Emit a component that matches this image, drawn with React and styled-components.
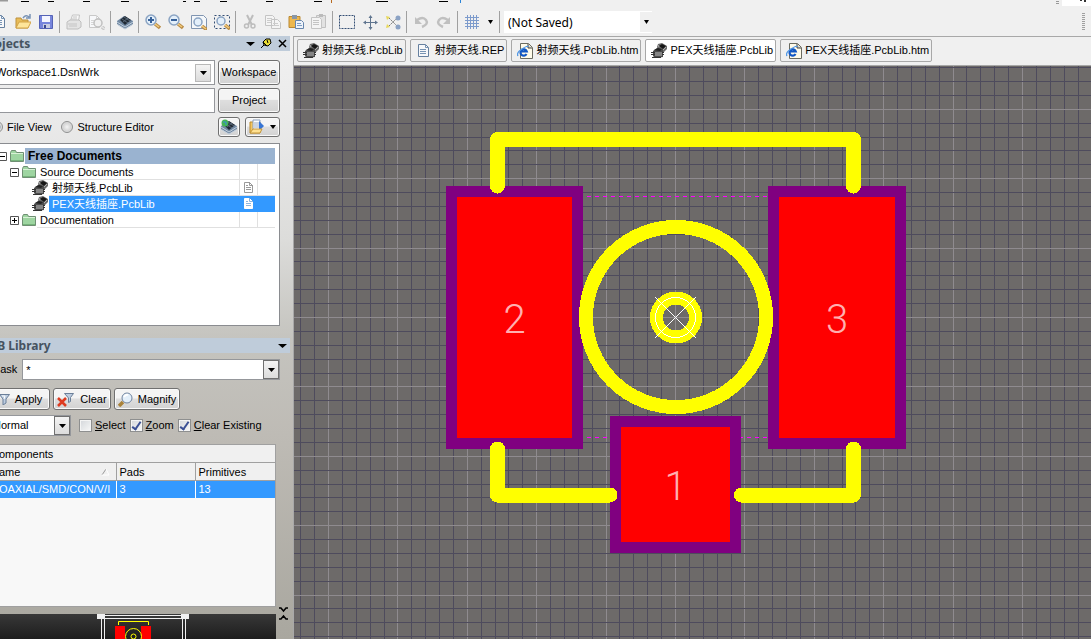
import React, { useState } from "react";
import styled, { createGlobalStyle } from "styled-components";

const uiFont = `"Liberation Sans", "Noto Sans CJK SC", sans-serif`;

const GlobalStyle = createGlobalStyle`
    * {
        box-sizing: border-box;
    }
    body {
        margin: 0;
        overflow: hidden;
        background: #f0f0f0;
        font-family: ${uiFont};
        font-size: 11px;
        line-height: 17px;
        color: #000;
    }
    button, input, select {
        font: inherit;
        color: inherit;
        margin: 0;
        padding: 0;
    }
    svg {
        display: block;
        flex-shrink: 0;
    }
`;

const Page = styled.div`
    height: 100vh;
    display: flex;
    flex-direction: column;
`;

const MenuEdge = styled.header`
    height: 8px;
    display: flex;
    justify-content: space-between;
`;

const Toolbar = styled.div`
    height: 28px;
    margin-left: -12px;
    padding-right: 6px;
    display: flex;
    align-items: center;
`;

const ToolButton = styled.button`
    width: ${(props) => (props.$narrow ? "14px" : "23px")};
    height: 22px;
    display: flex;
    align-items: center;
    justify-content: center;
    flex-shrink: 0;
    border: none;
    background: none;
`;

const Separator = styled.div`
    width: 5px;
    height: 22px;
    flex-shrink: 0;
    background: linear-gradient(#a0a0a0, #a0a0a0) center / 1px 100% no-repeat;
`;

const SavedCombo = styled.div`
    width: 148px;
    height: 22px;
    margin-left: 2px;
    display: flex;
    align-items: center;
    background: #fff;
`;

const Select = styled.select`
    flex: 1;
    min-width: 0;
    height: 100%;
    padding-left: ${(props) => props.$pad}px;
    appearance: none;
    border: none;
    outline: none;
    background: #fff;
    font-family: ${(props) => (props.$large ? `"Noto Sans", sans-serif` : "inherit")};
    font-size: ${(props) => (props.$large ? "12px" : "11px")};
`;

const SavedArrow = styled.span`
    width: 12px;
    height: 20px;
    display: flex;
    align-items: center;
    justify-content: center;
    background: #f0f0f0;
`;

const Gripper = styled.div`
    width: 3px;
    height: 18px;
    margin-left: auto;
    background: repeating-linear-gradient(#a0a0a0 0 1px, #f0f0f0 1px 2px);
`;

const Workbench = styled.div`
    flex: 1;
    min-height: 0;
    display: flex;
`;

const SidePanel = styled.aside`
    width: 294px;
    flex-shrink: 0;
    overflow: hidden;
    display: flex;
    border-right: 1px solid #a8a8a8;
    background: linear-gradient(#f1f1f1 0%, #ebebeb 12%, #dcdcda 34%, #c5c4bf 50%, #bebbb5 66%, #a9a79f 100%);
`;

/* the dock hangs a little past the left edge of the window */
const Dock = styled.div`
    flex: 1;
    min-width: 0;
    margin-left: -24px;
    display: flex;
    flex-direction: column;
`;

const PanelTitle = styled.h2`
    height: 15px;
    margin: 0 3px 0 0;
    padding: 0 1px 0 6px;
    display: flex;
    align-items: center;
    gap: 2px;
    background: #bfccda;
    color: #465360;
    font-family: "Noto Sans", sans-serif;
    font-size: 12px;
    line-height: 16px;
    font-weight: bold;
`;

const TitleText = styled.span`
    flex: 1;
`;

const TitleButton = styled.button`
    width: 14px;
    height: 14px;
    display: flex;
    align-items: center;
    justify-content: center;
    border: none;
    background: none;
`;

const PanelBody = styled.div`
    padding: ${(props) => props.$top}px 13px 0 15px;
    display: flex;
    flex-direction: column;
`;

const Row = styled.div`
    height: ${(props) => props.$h}px;
    margin-bottom: ${(props) => props.$after || 0}px;
    display: flex;
    align-items: center;
    gap: ${(props) => props.$gap || 3}px;
`;

const Field = styled.div`
    flex: ${(props) => (props.$w ? "none" : 1)};
    width: ${(props) => (props.$w ? props.$w + "px" : "auto")};
    min-width: 0;
    height: 100%;
    display: flex;
    align-items: center;
    border: 1px solid #95979b;
    background: #fff;
`;

const FieldArrow = styled.span`
    width: 16px;
    height: ${(props) => (props.$inset ? "18px" : "100%")};
    margin-right: ${(props) => (props.$inset ? "3px" : 0)};
    display: flex;
    align-items: center;
    justify-content: center;
    border: 1px solid ${(props) => (props.$inset ? "#b8b8b8" : "#707070")};
    background: linear-gradient(#f4f4f4, #dcdcdc);
`;

const TextBox = styled.input`
    flex: 1;
    min-width: 0;
    height: 100%;
    padding-left: 3px;
    border: none;
    outline: none;
    background: #fff;
`;

const PushButton = styled.button`
    width: ${(props) => props.$w}px;
    height: ${(props) => props.$h || 22}px;
    display: flex;
    align-items: center;
    justify-content: center;
    flex-shrink: 0;
    gap: 5px;
    border: 1px solid #707070;
    border-radius: 3px;
    background: linear-gradient(#f4f4f4 45%, #dedede 50%, #d2d2d2);
    box-shadow: inset 0 0 0 1px #fafafa;
`;

const ViewChoice = styled.div`
    flex: 1;
    display: flex;
    gap: 10px;
`;

const CheckLabel = styled.label`
    display: flex;
    align-items: center;
    gap: ${(props) => props.$gap || 3}px;
    white-space: nowrap;
`;

const Radio = styled.input`
    appearance: none;
    width: 12px;
    height: 12px;
    border: 1px solid #8e8f8f;
    border-radius: 50%;
    background: ${(props) =>
        props.checked
            ? "radial-gradient(#2f5f90 0 2px, #d8d8d8 4px, #f4f4f4)"
            : "radial-gradient(#f4f4f4, #d4d4d4 4px, #f4f4f4)"};
`;

const CheckBox = styled.input`
    appearance: none;
    width: 13px;
    height: 13px;
    display: grid;
    place-content: center;
    border: 1px solid #8e8f8f;
    background: linear-gradient(135deg, #d3d6da, #f8f8f8);
    box-shadow: inset 0 0 0 1px #f4f4f4;
    &:checked::before {
        content: "";
        width: 3px;
        height: 8px;
        margin-bottom: 2px;
        border: solid #3a4f94;
        border-width: 0 2px 2px 0;
        box-sizing: content-box;
        transform: rotate(35deg);
    }
`;

const Tree = styled.ul`
    height: 183px;
    margin: 0;
    padding: 4px 4px 0 0;
    list-style: none;
    border: 1px solid #8a8c90;
    background: #fff;
`;

const TreeRow = styled.li`
    height: 16px;
    padding-left: ${(props) => props.$indent}px;
    display: flex;
    align-items: center;
`;

const Expander = styled.button`
    width: 9px;
    height: 9px;
    margin-right: 3px;
    display: flex;
    flex-shrink: 0;
    border: none;
    background: none;
`;

const TreeLabel = styled.span`
    flex: 1;
    height: 16px;
    margin-left: 1px;
    padding-left: 3px;
    font-size: ${(props) => (props.$root ? "12px" : "11px")};
    font-weight: ${(props) => (props.$root ? "bold" : "normal")};
    color: ${(props) => (props.$selected ? "#fff" : "#000")};
    background: ${(props) => (props.$root ? "#9ab3d0" : props.$selected ? "#3399ff" : "none")};
    border-bottom: 1px solid
        ${(props) => (props.$root ? "#9ab3d0" : props.$selected ? "#3399ff" : "#e0e0e0")};
    white-space: nowrap;
`;

const TreeCell = styled.span`
    width: 18px;
    height: 16px;
    display: flex;
    align-items: center;
    justify-content: center;
    border: solid #e0e0e0;
    border-width: 0 0 1px 1px;
    background: ${(props) => (props.$selected ? "#3399ff" : "none")};
    border-color: ${(props) => (props.$selected ? "#3399ff" : "#e0e0e0")};
`;

const ListFrame = styled.div`
    height: 163px;
    margin: 8px 17px 0 12px;
    border: solid #a0a0a0;
    border-width: 1px 1px 1px 0;
    background: #f8f8f8;
`;

const List = styled.table`
    width: 100%;
    table-layout: fixed;
    border-collapse: collapse;
    caption {
        height: 18px;
        padding: 1px 0 0 3px;
        text-align: left;
        line-height: 16px;
        border-bottom: 1px solid #a0a0a0;
        background: #f0f0f0;
    }
    th, td {
        height: 17px;
        padding: 0 3px;
        line-height: 16px;
        text-align: left;
        font-weight: normal;
        white-space: nowrap;
        overflow: hidden;
    }
    th {
        padding-top: 1px;
        background: #f0f0f0;
        border-bottom: 1px solid #a0a0a0;
    }
    th + th {
        border-left: 1px solid #a0a0a0;
    }
    td {
        color: #fff;
        background: #3399ff;
    }
    td + td {
        border-left: 1px solid #fff;
    }
`;

const HeadCell = styled.span`
    display: flex;
    align-items: center;
    justify-content: space-between;
    padding-right: 3px;
`;

const PreviewRow = styled.div`
    flex: 1;
    min-height: 0;
    display: flex;
    gap: 3px;
`;

const Preview = styled.div`
    width: 300px;
    margin-top: 7px;
    padding-left: 24px;
    overflow: hidden;
    background: linear-gradient(#383838, #1c1c1c 26px);
`;

const Editor = styled.main`
    flex: 1;
    min-width: 0;
    display: flex;
    flex-direction: column;
    border-top: 1px solid #a8a8a8;
`;

const Tabs = styled.nav`
    height: 29px;
    padding: 2px 3px 0;
    display: flex;
    align-items: flex-start;
    gap: 4px;
    border-bottom: 1px solid #a8a8a8;
`;

const Tab = styled.button`
    height: 23px;
    padding: 0 2px 0 5px;
    display: flex;
    align-items: center;
    gap: 3px;
    flex-shrink: 0;
    border: 1px solid #a8a8a8;
    border-radius: 2px;
    background: ${(props) => (props.$active ? "#fff" : "#f0f0f0")};
    white-space: nowrap;
`;

const Board = styled.div`
    flex: 1;
    min-height: 0;
    overflow: hidden;
    background: #6d6a69;
`;

const Icon = ({ children, w = 16, h = 16 }) => (
    <svg width={w} height={h} viewBox={`0 0 ${w} ${h}`} fill="none">
        {children}
    </svg>
);

const Down = ({ w = 7 }) => (
    <svg width={w} height={4} viewBox="0 0 7 4" preserveAspectRatio="none">
        <path d="M0 0h7L3.5 4z" fill="#000" />
    </svg>
);

const Sheet = ({ x = 2, y = 1, gray }) => (
    <g transform={`translate(${x} ${y})`}>
        <path d="M.5 .5h7l3 3v9H.5z" fill="#f7f8fa" stroke={gray ? "#c8c8c8" : "#66809f"} />
        <path d="M7.5 .5v3h3M2 5.5h6M2 7.5h6M2 9.5h6" stroke={gray ? "#d6d6d6" : "#7894b4"} />
    </g>
);

const Lens = ({ sign, gray, x = 0, y = 0, r = 5 }) => (
    <g transform={`translate(${x} ${y})`}>
        <path d="M10 10l5 4" stroke={gray ? "#c4c4c4" : "#b98b45"} strokeWidth="3.5" />
        <path d="M10 10l4 3" stroke={gray ? "#e4e4e4" : "#f2cc7c"} strokeWidth="1.5" />
        <circle cx="6" cy="6" r={r} fill={gray ? "#f0f0f0" : "#e3effa"} stroke={gray ? "#c0c0c0" : "#8ba4c3"} strokeWidth="1.5" />
        {sign && <path d={sign === "+" ? "M3 6h6M6 3v6" : "M3 6h6"} stroke="#37629b" strokeWidth="2" />}
    </g>
);

const PartIcon = () => (
    <Icon>
        <path d="M6 4l1-3 4-1 5 3v3l-4 4-5-2z" fill="#6a6a6a" />
        <path d="M8 3l3-2 4 2-3 3z" fill="#161616" />
        <path d="M2 8l4-3 6 1v8l-8 1-2-2z" fill="#4c4c4c" />
        <path d="M3 7l4-2 4 1-2 2z" fill="#222" />
        <path d="M4 9h7v4H4z" fill="#858585" />
        <path d="M0 9.500h4M0 11.500h4M1 14.500h9M11 9.500h2M11 11.500h2" stroke="#333" />
        <path d="M7 2l1 2M15 4l-3 3" stroke="#b0b0b0" />
    </Icon>
);

const ChipIcon = ({ globe }) => (
    <Icon>
        <path d="M0 7l7-5 9 5v3l-8 5-8-5z" fill="#7188a2" />
        <path d="M0 8l8 5 8-5M1 11l7 4 7-4" stroke="#c3d0dd" />
        <path d="M3 6l5-4 6 4-6 5z" fill="#202a35" />
        <path d="M5 5l6 4M7 3l6 4M6 8l5-4" stroke="#566575" />
        {globe && <circle cx="4" cy="4" r="3.500" fill="#44b554" />}
        {globe && <path d="M2 3h3v3" stroke="#3a88dd" />}
    </Icon>
);

const BrowserIcon = () => (
    <Icon>
        <path d="M3.500 .5h8l4 4v11h-12z" fill="#fffbea" stroke="#6b6b60" />
        <path d="M11 1v4h4" fill="#d9d8ca" stroke="#444" />
        <path d="M9.500 11A3.200 3.200 0 1 1 9.800 8.500H4" stroke="#1257c4" strokeWidth="2.200" />
        <path d="M1 13Q-1 10 5 6T11 4" stroke="#5399e5" strokeWidth="1.300" />
    </Icon>
);

const ReportIcon = () => (
    <Icon>
        <Sheet x={2} y={1} />
    </Icon>
);

const FolderIcon = () => (
    <Icon w={14} h={12}>
        <path d="M.5 2.500l1-2h4l1 2h7v9H.5z" fill="#9ed5a1" stroke="#6f8f73" />
        <path d="M1 3.500h12" stroke="#d8f1d6" />
        <path d="M1 10.500h12" stroke="#76b47b" />
    </Icon>
);

const OpenIcon = () => (
    <Icon>
        <path d="M1 14V4h5l1 2h6v8z" fill="#e8bc58" stroke="#bd913d" />
        <path d="M1 14l3-6h12l-3 6z" fill="#fee59a" stroke="#d2a346" />
        <path d="M8 4q3-4 6-1M11 4h4V0" stroke="#7892b5" strokeWidth="1.500" />
    </Icon>
);

const FunnelIcon = () => (
    <Icon w={11} h={11}>
        <path d="M.5 .5h10L7 5v4l-3 2V5z" fill="#bdcde0" stroke="#6b7f99" />
        <path d="M3 2h3l-1 3" stroke="#fff" />
    </Icon>
);

const DocMark = ({ light }) => (
    <Icon w={9} h={11}>
        <path d="M.5 .5h5l3 3v7h-8z" fill={light ? "#fff" : "#fff"} stroke={light ? "#fff" : "#999"} />
        <path d="M5.500 0v3.500H9M2 5.500h5M2 7.500h5M2 3.500h2" stroke={light ? "#8fb4dc" : "#999"} />
    </Icon>
);

const toolGroups = [
    [
        ["New", <Icon><Sheet x={2} y={1} /></Icon>],
        ["Open", <OpenIcon />],
        [
            "Save",
            <Icon>
                <path d="M1.500 1.500h13v13h-13z" fill="#7785dc" stroke="#5563b6" />
                <path d="M4 2h8v6H4z" fill="#f4f5ff" />
                <path d="M5 10h7v4H5z" fill="#c8cce2" />
                <path d="M6 11h2v3H6z" fill="#39468f" />
            </Icon>,
        ],
    ],
    [
        [
            "Print",
            <Icon>
                <path d="M4.500 7l2-6h7l-1 6" fill="#f9f9f9" stroke="#c4c4c4" />
                <path d="M1 8l3-2h9l2 2v5l-3 2H1z" fill="#e4e4e4" stroke="#bebebe" />
                <path d="M2 10h9M3 12h8M7 3h4M6 5h5" stroke="#c4c4c4" />
            </Icon>,
        ],
        ["Print Preview", <Icon><Sheet x={0} y={1} gray /><Lens x={3} y={3} r={4} gray /></Icon>],
    ],
    [["Devices", <ChipIcon />]],
    [
        ["Zoom In", <Icon><Lens sign="+" /></Icon>],
        ["Zoom Out", <Icon><Lens sign="-" /></Icon>],
        [
            "Fit Document",
            <Icon>
                <path d="M.5 1.500h12l3 3v10H.5z" fill="#f4f7fa" stroke="#8095b1" />
                <Lens x={1} y={2} r={4} />
            </Icon>,
        ],
        [
            "Zoom Selected",
            <Icon>
                <path d="M.5 1.500h15v13H.5z" stroke="#344f75" strokeDasharray="2 2" />
                <Lens x={1} y={1} r={4} />
            </Icon>,
        ],
    ],
    [
        [
            "Cut",
            <Icon>
                <path d="M5 1l5 10M11 1L6 11" stroke="#bdbdbd" strokeWidth="2" />
                <circle cx="4.500" cy="12" r="2" stroke="#bdbdbd" strokeWidth="1.500" />
                <circle cx="11" cy="12" r="2" stroke="#bdbdbd" strokeWidth="1.500" />
            </Icon>,
        ],
        [
            "Copy",
            <Icon>
                <path d="M.5 1.500h7l2 2v8h-9zM6.500 5.500h6l3 3v6h-9z" fill="#f4f4f4" stroke="#c4c4c4" />
                <path d="M2 4.500h5M2 6.500h4M2 8.500h4M8 9.500h5M8 11.500h6" stroke="#ccc" />
            </Icon>,
        ],
        [
            "Paste",
            <Icon>
                <path d="M1 2.500h11v11H1z" fill="#eeb84e" stroke="#b98833" />
                <path d="M4 1h5v4H4z" fill="#8996a5" />
                <path d="M7.500 6.500h6l2 2v6h-8z" fill="#eef3fa" stroke="#6786ad" />
                <path d="M9 9.500h4M9 11.500h5" stroke="#7f9dc1" />
            </Icon>,
        ],
        [
            "Rubber Stamp",
            <Icon>
                <path d="M5.500 1.500h9v12h-9z" fill="#e2e2e2" stroke="#c0c0c0" />
                <path d="M8 0h4v3H8z" fill="#bbb" />
                <path d="M.5 3.500h8l2 2v9H.5z" fill="#f4f4f4" stroke="#c4c4c4" />
                <path d="M2 6.500h6M2 8.500h6M2 10.500h6" stroke="#c4c4c4" />
            </Icon>,
        ],
    ],
    [
        ["Select Area", <Icon><path d="M.5 1.500h15v13H.5z" stroke="#344f75" strokeDasharray="2 1" /></Icon>],
        [
            "Move",
            <Icon>
                <path d="M8.500 2v12M2 8.500h13" stroke="#60758f" />
                <path d="M8.500 1l2 3h-4zM8.500 16l2-3h-4zM1 8.500l3-2v4zM16 8.500l-3-2v4z" fill="#60758f" />
            </Icon>,
        ],
        [
            "Deselect",
            <Icon>
                <path d="M4 4l8 8M4 12l8-8" stroke="#777" strokeDasharray="2 1" />
                <path d="M1 2l4 1-3 3zM1 14l4-1-3-3z" fill="#e8d858" />
                <circle cx="13" cy="4" r="2.500" fill="#8ba2c4" />
                <circle cx="13" cy="13" r="2.500" fill="#8ba2c4" />
            </Icon>,
        ],
    ],
    [
        ["Undo", <Icon><path d="M4 6q6-4 9 0t-4 7" stroke="#c0c0c0" strokeWidth="2.500" /><path d="M2 3v7h7z" fill="#c0c0c0" /></Icon>],
        ["Redo", <Icon><path d="M12 6q-6-4-9 0t4 7" stroke="#c0c0c0" strokeWidth="2.500" /><path d="M14 3v7H7z" fill="#c0c0c0" /></Icon>],
    ],
    [["Grid", <Icon><path d="M3.500 1v14M6.500 1v14M9.500 1v14M12.500 1v14M1 3.500h14M1 6.500h14M1 9.500h14M1 12.500h14" stroke="#7d9bcc" /></Icon>]],
];

const files = [
    { name: "射频天线.PcbLib", icon: <PartIcon /> },
    { name: "射频天线.REP", icon: <ReportIcon /> },
    { name: "射频天线.PcbLib.htm", icon: <BrowserIcon /> },
    { name: "PEX天线插座.PcbLib", icon: <PartIcon /> },
    { name: "PEX天线插座.PcbLib.htm", icon: <BrowserIcon /> },
];

const treeItems = [
    { name: "Free Documents", indent: 6, box: "-", root: true },
    { name: "Source Documents", indent: 18, box: "-" },
    { name: "射频天线.PcbLib", indent: 40, doc: true },
    { name: "PEX天线插座.PcbLib", indent: 40, doc: true },
    { name: "Documentation", indent: 18, box: "+" },
];

const GRID = 13.88;

// grid lines are spread out from the component origin, every fifth one is major
const gridLines = (origin, from, to) => {
    const lines = [];
    for (let k = from; k <= to; k++) {
        lines.push({ k, at: Math.floor(origin + k * GRID) + 0.5, major: k % 5 === 0 });
    }
    return lines.sort((a, b) => a.major - b.major);
};

const Pad = ({ x, y, w, h, name }) => (
    <g>
        <rect x={x} y={y} width={w} height={h} fill="#800080" />
        <rect x={x + 11} y={y + 11} width={w - 22} height={h - 22} fill="#f00" />
        <text
            x={x + w / 2}
            y={y + h / 2 + 15}
            textAnchor="middle"
            fontFamily="Roboto, sans-serif"
            fontWeight="300"
            fontSize="40"
            fill="#ffb0b0"
        >
            {name}
        </text>
    </g>
);

const Footprint = () => (
    <svg width="100%" height="100%" fill="none">
        <g transform="translate(-294 -66)">
            {gridLines(675.5, -27, 120).map((l) => (
                <path key={"v" + l.k} d={`M${l.at} 66V3000`} stroke={l.major ? "#8f8b8f" : "#4e4b5d"} />
            ))}
            {gridLines(317.5, -18, 120).map((l) => (
                <path key={"h" + l.k} d={`M294 ${l.at}H3000`} stroke={l.major ? "#8f8b8f" : "#4e4b5d"} />
            ))}
            <path d="M583 196.500H768M583 437.500H768" stroke="#f0f" strokeDasharray="4 4" strokeDashoffset="4" />
            <Pad x={446} y={186} w={137} h={263} name="2" />
            <Pad x={768} y={186} w={138} h={263} name="3" />
            <Pad x={610} y={416} w={131} h={137} name="1" />
            <g stroke="#ff0" shapeRendering="crispEdges">
                <path
                    d="M497.500 186V139.500H853.500V186M497.500 449V495H610M741.500 495H853.500V449"
                    strokeWidth="15"
                    strokeLinecap="round"
                    strokeLinejoin="round"
                />
                <circle cx="676" cy="317" r="90" strokeWidth="14" />
                <circle cx="676" cy="317.500" r="19.500" strokeWidth="13" />
            </g>
            <g stroke="#fff" shapeRendering="crispEdges">
                <circle cx="675.500" cy="317.500" r="20" />
                <path d="M655 297l41 41M696 297l-41 41" />
            </g>
        </g>
    </svg>
);

const MiniFootprint = () => (
    <svg width="276" height="25" fill="none">
        <path d="M101.500 0V25M104.500 0V25M182.500 0V25M185.500 0V25M101 1.500H185M101 4.500H185" stroke="#f0f0f0" />
        <path d="M97 0h8v5h-8zM181 0h8v5h-8z" fill="#f0f0f0" />
        <path d="M115 12h10v13h-10zM141 12h10v13h-10z" fill="#f00" />
        <path d="M118.500 11V7.500H148.500V11" stroke="#ff0" />
        <circle cx="133.500" cy="22.500" r="8" stroke="#ff0" />
        <circle cx="133.500" cy="22.500" r="2.500" stroke="#ff0" />
    </svg>
);

const App = () => {
    const [active, setActive] = useState(3);
    const [view, setView] = useState("file");
    const [checks, setChecks] = useState({ Select: false, Zoom: true, "Clear Existing": true });

    return (
        <Page>
            <GlobalStyle />
            <MenuEdge>
                <svg width="470" height="7" fill="none">
                    <path d="M0 .5h8" stroke="#999" strokeWidth="2" />
                    <path
                        d="M21 1.500h8M48 1.500h6M83 1.500h7M121 1.500h8M194 1.500h6M220 1.500h7M266 1.500h7M314 1.500h8M376 1.500h12M439 1.500h9M183 1.500h3"
                        stroke="#000"
                    />
                    <path d="M331.500 0v3" stroke="#b86a20" />
                    <path d="M460.500 0v3" stroke="#2a84d8" />
                </svg>
                <svg width="35" height="7">
                    <path d="M0 1.500h3M0 3.500h3" stroke="#999" />
                    <path d="M6 0h29v6H6z" fill="#fff" />
                    <path d="M24 0h2v1h-2zM28 0h2v2h-2z" fill="#333" />
                </svg>
            </MenuEdge>
            <Toolbar>
                {toolGroups.map((group, i) => (
                    <React.Fragment key={i}>
                        {i > 0 && <Separator />}
                        {group.map(([label, icon]) => (
                            <ToolButton key={label} aria-label={label}>
                                {icon}
                            </ToolButton>
                        ))}
                    </React.Fragment>
                ))}
                <ToolButton $narrow aria-label="Grid options">
                    <Down w={5} />
                </ToolButton>
                <Separator />
                <SavedCombo>
                    <Select $large $pad={4} aria-label="Filter">
                        <option>(Not Saved)</option>
                    </Select>
                    <SavedArrow>
                        <Down w={5} />
                    </SavedArrow>
                </SavedCombo>
                <Gripper />
            </Toolbar>
            <Workbench>
                <SidePanel>
                    <Dock>
                        <PanelTitle>
                            <TitleText>Projects</TitleText>
                            <TitleButton aria-label="Panel menu">
                                <Down w={9} />
                            </TitleButton>
                            <TitleButton aria-label="Pin panel">
                                <Icon w={11} h={11}>
                                    <path d="M5 1h4l1 4-3 3-4-1-1-3z" fill="#e9dc35" stroke="#000" />
                                    <path d="M3 7l-3 3M2 4l4 4M6 2l1 3" stroke="#000" />
                                </Icon>
                            </TitleButton>
                            <TitleButton aria-label="Close panel">
                                <Icon w={9} h={9}>
                                    <path d="M1 1l7 7M8 1L1 8" stroke="#000" strokeWidth="1.500" />
                                </Icon>
                            </TitleButton>
                        </PanelTitle>
                        <PanelBody $top={9}>
                            <Row $h={25} $after={3}>
                                <Field>
                                    <Select $pad={4} aria-label="Workspace file">
                                        <option>Workspace1.DsnWrk</option>
                                    </Select>
                                    <FieldArrow $inset>
                                        <Down />
                                    </FieldArrow>
                                </Field>
                                <PushButton $w={62} $h={25}>Workspace</PushButton>
                            </Row>
                            <Row $h={25} $after={4}>
                                <Field>
                                    <TextBox aria-label="Project file" />
                                </Field>
                                <PushButton $w={62} $h={25}>Project</PushButton>
                            </Row>
                            <Row $h={20} $after={6} $gap={5}>
                                <ViewChoice>
                                    <CheckLabel $gap={4}>
                                        <Radio type="radio" name="view" checked={view === "file"} onChange={() => setView("file")} />
                                        File View
                                    </CheckLabel>
                                    <CheckLabel $gap={4}>
                                        <Radio
                                            type="radio"
                                            name="view"
                                            checked={view === "structure"}
                                            onChange={() => setView("structure")}
                                        />
                                        Structure Editor
                                    </CheckLabel>
                                </ViewChoice>
                                <PushButton $w={22} $h={20} aria-label="Compile">
                                    <ChipIcon globe />
                                </PushButton>
                                <PushButton $w={35} $h={20} aria-label="Open document">
                                    <Icon>
                                        <path d="M1 3h10v11H1z" fill="#f3c55f" stroke="#ba8a2d" />
                                        <path d="M4 1h7v10H4z" fill="#fff" stroke="#8ba1bf" />
                                        <path d="M5 4h5M5 6h5M5 8h5" stroke="#99aac2" />
                                        <path d="M10 2l5 5-5 5z" fill="#3774d4" />
                                        <path d="M1 14l3-4h9l-2 4z" fill="#ffe191" stroke="#c3953a" />
                                    </Icon>
                                    <Down w={6} />
                                </PushButton>
                            </Row>
                            <Tree>
                                {treeItems.map((item) => {
                                    const selected = item.name === files[3].name;
                                    return (
                                        <TreeRow key={item.name} $indent={item.indent}>
                                            {item.box && (
                                                <Expander aria-label={"Toggle " + item.name}>
                                                    <Icon w={9} h={9}>
                                                        <path d="M.5 .5h8v8h-8z" fill="#fff" stroke="#555" />
                                                        <path d={item.box === "+" ? "M2 4.500h5M4.500 2v5" : "M2 4.500h5"} stroke="#000" />
                                                    </Icon>
                                                </Expander>
                                            )}
                                            {item.doc ? <PartIcon /> : <FolderIcon />}
                                            <TreeLabel $root={item.root} $selected={selected}>
                                                {item.name}
                                            </TreeLabel>
                                            {!item.root && (
                                                <>
                                                    <TreeCell $selected={selected}>
                                                        {item.doc && <DocMark light={selected} />}
                                                    </TreeCell>
                                                    <TreeCell $selected={selected} />
                                                </>
                                            )}
                                        </TreeRow>
                                    );
                                })}
                            </Tree>
                        </PanelBody>
                        <Row $h={12} />
                        <PanelTitle>
                            <TitleText>PCB Library</TitleText>
                            <TitleButton aria-label="Library menu">
                                <Down w={9} />
                            </TitleButton>
                        </PanelTitle>
                        <PanelBody $top={6}>
                            <Row $h={21} $after={8} $gap={5}>
                                <label htmlFor="mask">Mask</label>
                                <Field>
                                    <TextBox id="mask" defaultValue="*" />
                                    <FieldArrow>
                                        <Down />
                                    </FieldArrow>
                                </Field>
                            </Row>
                            <Row $h={22} $after={5}>
                                <PushButton $w={59}>
                                    <FunnelIcon />
                                    Apply
                                </PushButton>
                                <PushButton $w={58}>
                                    <Icon w={18} h={15}>
                                        <path d="M1 6l8 8M9 6l-8 8" stroke="#dd3b20" strokeWidth="2.500" />
                                        <path d="M7.500 1.500h9l-3 4v4l-2 1V6z" fill="#bdcde0" stroke="#6b7f99" />
                                    </Icon>
                                    Clear
                                </PushButton>
                                <PushButton $w={66}>
                                    <Icon w={15} h={15}>
                                        <path d="M5 10l-4 4" stroke="#a9823a" strokeWidth="3.500" />
                                        <circle cx="9" cy="6" r="5" fill="#e3effa" stroke="#70839e" />
                                        <path d="M6 5q2-3 4-2" stroke="#fff" strokeWidth="2" />
                                    </Icon>
                                    Magnify
                                </PushButton>
                            </Row>
                            <Row $h={21} $gap={4}>
                                <Field $w={80}>
                                    <Select $pad={1} aria-label="Highlight mode">
                                        <option>Normal</option>
                                    </Select>
                                    <FieldArrow>
                                        <Down />
                                    </FieldArrow>
                                </Field>
                                <span />
                                {Object.keys(checks).map((name) => (
                                    <CheckLabel key={name}>
                                        <CheckBox
                                            type="checkbox"
                                            checked={checks[name]}
                                            onChange={() => setChecks({ ...checks, [name]: !checks[name] })}
                                        />
                                        <span>
                                            <u>{name[0]}</u>
                                            {name.slice(1)}
                                        </span>
                                    </CheckLabel>
                                ))}
                            </Row>
                        </PanelBody>
                        <ListFrame>
                            <List>
                                <caption>Components</caption>
                                <colgroup>
                                    <col width="128" />
                                    <col width="79" />
                                    <col />
                                </colgroup>
                                <thead>
                                    <tr>
                                        <th>
                                            <HeadCell>
                                                Name
                                                <Icon w={9} h={8}>
                                                    <path d="M1 7l4-6" stroke="#999" />
                                                    <path d="M5 1l3 6H1" stroke="#fff" />
                                                </Icon>
                                            </HeadCell>
                                        </th>
                                        <th>Pads</th>
                                        <th>Primitives</th>
                                    </tr>
                                </thead>
                                <tbody>
                                    <tr>
                                        <td>COAXIAL/SMD/CON/V/I</td>
                                        <td>3</td>
                                        <td>13</td>
                                    </tr>
                                </tbody>
                            </List>
                        </ListFrame>
                        <PreviewRow>
                            <Preview>
                                <MiniFootprint />
                            </Preview>
                            <Icon w={9} h={13}>
                                <path d="M0 1h2l2.500 3L7 1h2M0 12h2l2.500-3L7 12h2" stroke="#000" strokeWidth="1.500" />
                            </Icon>
                        </PreviewRow>
                    </Dock>
                </SidePanel>
                <Editor>
                    <Tabs>
                        {files.map((file, i) => (
                            <Tab key={file.name} $active={i === active} onClick={() => setActive(i)}>
                                {file.icon}
                                {file.name}
                            </Tab>
                        ))}
                    </Tabs>
                    <Board>
                        <Footprint />
                    </Board>
                </Editor>
            </Workbench>
        </Page>
    );
};

export default App;
